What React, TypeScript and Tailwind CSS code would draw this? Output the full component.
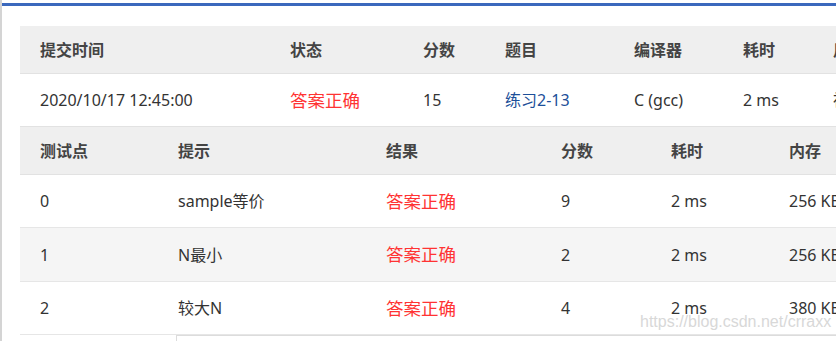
import React from "react";

const font = { fontFamily: '"Noto Sans", "Noto Sans CJK SC", sans-serif' };

function Cell({ w, children, className = "" }: { w: string; children?: React.ReactNode; className?: string }) {
  return <div className={`${w} shrink-0 pl-5 ${className}`}>{children}</div>;
}

const red = "text-[#ff3333] text-[17.5px]";

export default function App() {
  const rows = [
    { id: "0", hint: "sample等价", score: "9", time: "2 ms", mem: "256 KB", bg: "bg-white", h: "h-[53px]" },
    { id: "1", hint: "N最小", score: "2", time: "2 ms", mem: "256 KB", bg: "bg-[#f5f5f5]", h: "h-[54px]" },
    { id: "2", hint: "较大N", score: "4", time: "2 ms", mem: "380 KB", bg: "bg-white", h: "h-[53px]" },
  ];
  return (
    <div className="relative w-[836px] h-[341px] overflow-hidden bg-white text-[16px] text-[#333]" style={font}>
      <div className="flex h-full">
        <div className="w-[2px] bg-[#d4d4d4] shrink-0" />
        <div className="flex-1 flex flex-col">
          <div className="h-[3px] shrink-0" />
          <div className="h-[3px] shrink-0 bg-[#3b68bd]" />
          <div className="h-[20px] shrink-0" />
          <div className="ml-[18px] w-[900px] flex flex-col">
            <div className="flex items-center h-[48px] shrink-0 bg-[#efefef] border-b border-[#e2e2e2] font-bold text-[#444]">
              <Cell w="w-[250px]">提交时间</Cell>
              <Cell w="w-[133px]">状态</Cell>
              <Cell w="w-[82px]">分数</Cell>
              <Cell w="w-[129px]">题目</Cell>
              <Cell w="w-[109px]">编译器</Cell>
              <Cell w="w-[90px]">耗时</Cell>
              <Cell w="w-[100px]">用户</Cell>
            </div>
            <div className="flex items-center h-[53px] shrink-0 bg-white border-b border-[#e2e2e2]">
              <Cell w="w-[250px]">2020/10/17 12:45:00</Cell>
              <Cell w="w-[133px]" className={red}>答案正确</Cell>
              <Cell w="w-[82px]">15</Cell>
              <Cell w="w-[129px]" className="text-[#1c4f99]">练习2-13</Cell>
              <Cell w="w-[109px]">C (gcc)</Cell>
              <Cell w="w-[90px]">2 ms</Cell>
              <Cell w="w-[100px]">裕</Cell>
            </div>
            <div className="flex items-center h-[48px] shrink-0 bg-[#efefef] border-b border-[#e2e2e2] font-bold text-[#444]">
              <Cell w="w-[138px]">测试点</Cell>
              <Cell w="w-[208px]">提示</Cell>
              <Cell w="w-[175px]">结果</Cell>
              <Cell w="w-[110px]">分数</Cell>
              <Cell w="w-[118px]">耗时</Cell>
              <Cell w="w-[100px]">内存</Cell>
            </div>
            {rows.map((r) => (
              <div key={r.id} className={`flex items-center ${r.h} shrink-0 ${r.bg} border-b border-[#e6e6e6]`}>
                <Cell w="w-[138px]">{r.id}</Cell>
                <Cell w="w-[208px]">{r.hint}</Cell>
                <Cell w="w-[175px]" className={red}>答案正确</Cell>
                <Cell w="w-[110px]">{r.score}</Cell>
                <Cell w="w-[118px]">{r.time}</Cell>
                <Cell w="w-[100px]">{r.mem}</Cell>
              </div>
            ))}
            <div className="ml-[156px] h-[10px] shrink-0 border-l border-t border-[#dcdcdc]" />
          </div>
        </div>
      </div>
      <div
        className="absolute left-[640px] top-[312px] text-[16px] leading-[20px] text-[#d8d8d8]"
        style={{ fontFamily: '"Liberation Sans", Arial, sans-serif' }}
      >
        https://blog.csdn.net/crraxx
      </div>
    </div>
  );
}
